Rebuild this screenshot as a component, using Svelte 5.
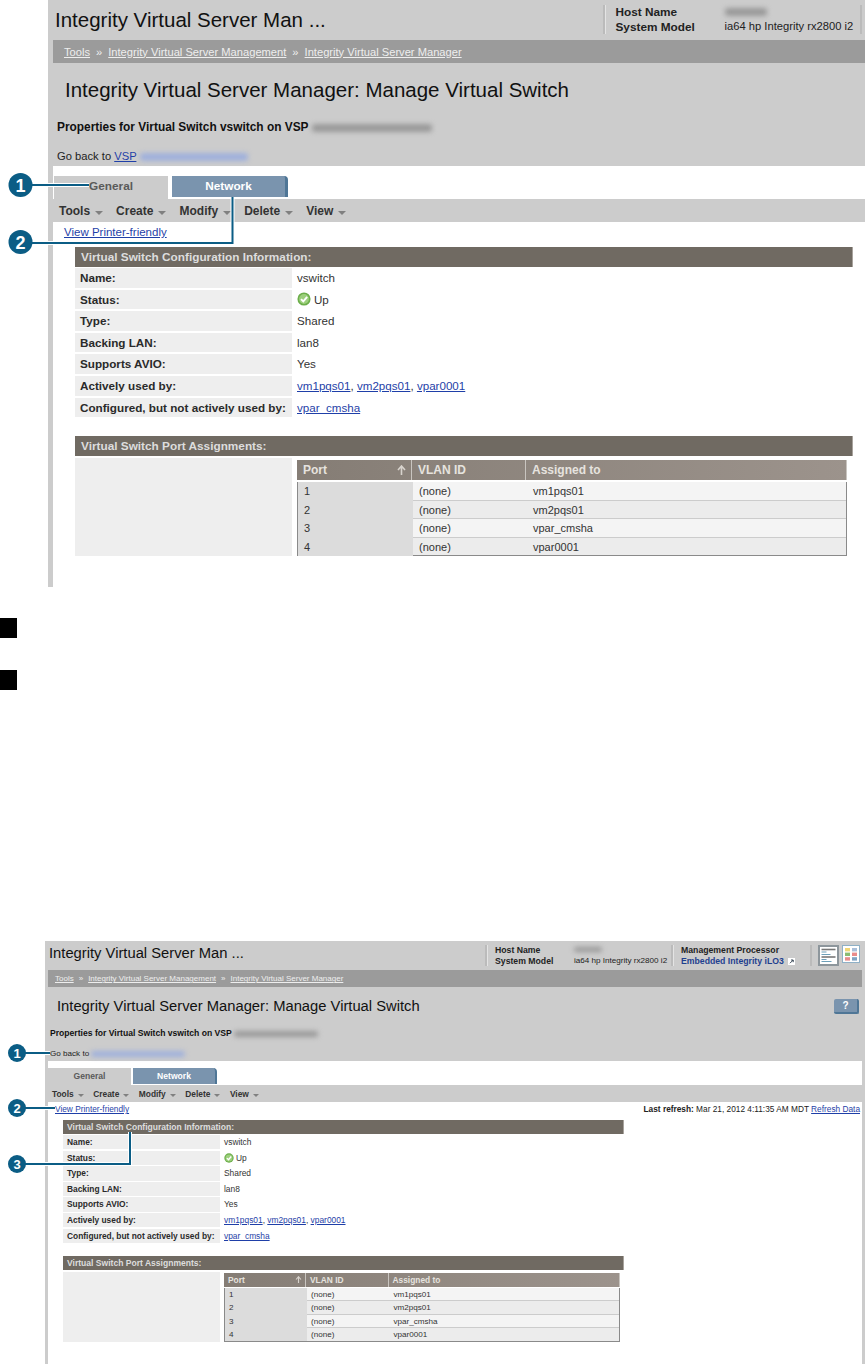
<script>
  const tools = ['Tools', 'Create', 'Modify', 'Delete', 'View'];
  const crumbs = ['Tools', 'Integrity Virtual Server Management', 'Integrity Virtual Server Manager'];
  const simpleRows = [
    ['Type:', 'Shared'],
    ['Backing LAN:', 'lan8'],
    ['Supports AVIO:', 'Yes'],
  ];
  const ports = [
    ['1', 'vm1pqs01'],
    ['2', 'vm2pqs01'],
    ['3', 'vpar_cmsha'],
    ['4', 'vpar0001'],
  ];
</script>

{#snippet screen(v)}
  <section class="fig {v}">
    <div class="head">
      <div class="topbar">
        <div class="app-title">Integrity Virtual Server Man ...</div>
        <div class="info">
          <div class="info-labels"><b>Host Name</b><b>System Model</b></div>
          <div class="info-values">
            <span class="smudge host"></span>
            <span>ia64 hp Integrity rx2800 i2</span>
          </div>
        </div>
        {#if v === 'bot'}
          <div class="info mp">
            <div class="info-labels">
              <b>Management Processor</b>
              <b class="mp-link">Embedded Integrity iLO3
                <svg class="ext" viewBox="0 0 7 7" width="7" height="7"><rect width="7" height="7" fill="#fff"/><path d="M2 5.2 5 2.2M3 2h2.2v2.2" fill="none" stroke="#234" stroke-width=".9"/></svg>
              </b>
            </div>
          </div>
          <div class="views">
            <svg class="view on" viewBox="0 0 21 21" width="21" height="21">
              <rect width="21" height="21" fill="#8d969c"/>
              <rect x="2" y="2" width="17" height="17" fill="#fff"/>
              <path d="M3.5 4.5h14" stroke="#777" stroke-width="1.6"/>
              <path d="M3.5 7h5M3.5 9.5h9" stroke="#6d9fb8"/>
              <path d="M3.5 12h14" stroke="#777" stroke-width="1.6"/>
              <path d="M3.5 14.5h5M3.5 16.5h10" stroke="#6d9fb8"/>
            </svg>
            <svg class="view" viewBox="0 0 18 18" width="18" height="18">
              <rect width="18" height="18" fill="#8fb0c6"/>
              <rect x="1" y="1" width="16" height="16" fill="#fff"/>
              <rect x="3" y="3" width="5" height="3.4" fill="#f2d675"/>
              <rect x="10" y="3" width="5" height="3.4" fill="#a9bfd9"/>
              <rect x="3" y="7.6" width="5" height="3.4" fill="#8cbb72"/>
              <rect x="10" y="7.6" width="5" height="3.4" fill="#e98b8b"/>
              <rect x="3" y="12.2" width="5" height="3.4" fill="#e98b8b"/>
              <rect x="10" y="12.2" width="5" height="3.4" fill="#7fa3c4"/>
            </svg>
          </div>
        {/if}
      </div>

      <nav class="crumbs">
        {#each crumbs as c, i}
          {#if i > 0}<span class="sep">»</span>{/if}
          <a href="#top">{c}</a>
        {/each}
      </nav>

      <div class="page-title">
        <h1>Integrity Virtual Server Manager: Manage Virtual Switch</h1>
        {#if v === 'bot'}<button class="help">?</button>{/if}
      </div>

      <p class="props"><b>Properties for Virtual Switch vswitch on VSP</b> <span class="smudge props-host"></span></p>
      <p class="back">
        Go back to
        {#if v === 'top'}<a href="#top">VSP</a>{/if}
        <span class="smudge link back-host"></span>
      </p>
    </div>

    <div class="tabs">
      <div class="tab active">General</div>
      <div class="tab">Network</div>
    </div>

    <div class="menu">
      {#each tools as t}
        <span class="menu-item">{t}<i class="caret"></i></span>
      {/each}
    </div>

    <div class="printer">
      <a href="#top">View Printer-friendly</a>
      {#if v === 'bot'}
        <span class="refresh"><b>Last refresh:</b> Mar 21, 2012 4:11:35 AM MDT <a href="#top">Refresh Data</a></span>
      {/if}
    </div>

    <div class="content">
      <h2>Virtual Switch Configuration Information:</h2>
      <div class="row first"><div class="key">Name:</div><div class="val">vswitch</div></div>
      <div class="row">
        <div class="key">Status:</div>
        <div class="val status">
          <svg class="ok" viewBox="0 0 16 16"><circle cx="8" cy="8" r="7.5" fill="#6cae4a"/><circle cx="8" cy="8" r="5.6" fill="#9ccf7c"/><path d="M4.6 8.2 7.2 10.8 11.6 5.6" fill="none" stroke="#fff" stroke-width="2.2"/></svg>
          Up
        </div>
      </div>
      {#each simpleRows as r}
        <div class="row"><div class="key">{r[0]}</div><div class="val">{r[1]}</div></div>
      {/each}
      <div class="row">
        <div class="key">Actively used by:</div>
        <div class="val"><a href="#top">vm1pqs01</a>, <a href="#top">vm2pqs01</a>, <a href="#top">vpar0001</a></div>
      </div>
      <div class="row">
        <div class="key">Configured, but not actively used by:</div>
        <div class="val"><a href="#top">vpar_cmsha</a></div>
      </div>

      <h2 class="second">Virtual Switch Port Assignments:</h2>
      <div class="ports">
        <div class="ports-key"></div>
        <div class="ports-table">
          <div class="tr th">
            <div>Port
              <svg class="sort" viewBox="0 0 9 10"><path d="M4.5 10V2M1 5l3.5-4L8 5" fill="none" stroke="#d8d3cd" stroke-width="1.6"/></svg>
            </div>
            <div>VLAN ID</div>
            <div>Assigned to</div>
          </div>
          {#each ports as p}
            <div class="tr">
              <div>{p[0]}</div>
              <div>(none)</div>
              <div>{p[1]}</div>
            </div>
          {/each}
        </div>
      </div>
    </div>
  </section>
{/snippet}

<div class="page">
  {@render screen('top')}

  <div class="bullet"></div>
  <div class="bullet"></div>

  {@render screen('bot')}

  <!-- numbered callouts sit over both screens -->
  <svg class="callouts" viewBox="0 0 865 1364" width="865" height="1364">
    <g fill="none" stroke="#fff" stroke-width="4">
      <path d="M30 185H89"/>
      <path d="M30 243H232.500V197"/>
      <path d="M24 1053H50"/>
      <path d="M24 1108H55"/>
      <path d="M24 1164H130V1132"/>
    </g>
    <g fill="none" stroke="#0b5d85" stroke-width="2">
      <path d="M30 185H89"/>
      <path d="M30 243H232.500V197"/>
      <path d="M24 1053H50"/>
      <path d="M24 1108H55"/>
      <path d="M24 1164H130V1132"/>
    </g>
    <g fill="#0b5d85">
      <circle cx="20.500" cy="185" r="12"/>
      <circle cx="20.500" cy="242" r="12"/>
      <circle cx="17" cy="1053" r="9"/>
      <circle cx="17" cy="1108" r="9"/>
      <circle cx="17" cy="1164" r="9"/>
    </g>
    <g class="num big">
      <text x="20.500" y="191.500">1</text>
      <text x="20.500" y="248.500">2</text>
    </g>
    <g class="num">
      <text x="17" y="1057.500">1</text>
      <text x="17" y="1112.500">2</text>
      <text x="17" y="1168.500">3</text>
    </g>
  </svg>
</div>

<style>
  :global(body) {
    margin: 0;
    background: #fff;
  }

  .page {
    position: relative;
    width: 865px;
    height: 1364px;
    overflow: hidden;
    font-family: "Liberation Sans", Arial, sans-serif;
    color: #222;
  }

  .callouts {
    position: absolute;
    left: 0;
    top: 0;
    pointer-events: none;
  }

  .num {
    font-family: "Liberation Sans", Arial, sans-serif;
    font-weight: 700;
    font-size: 13px;
    fill: #fff;
    text-anchor: middle;
  }

  .num.big {
    font-size: 18px;
  }

  .bullet {
    width: 17px;
    height: 20px;
    background: #000;
    margin-top: 31px;
  }

  .bullet + .bullet {
    margin-top: 32px;
  }

  a {
    color: #1f3fa8;
    text-decoration: underline;
  }

  p,
  h1,
  h2 {
    margin: 0;
  }

  .fig {
    box-sizing: border-box;
    background: #fff;
    border-left: 5px solid #ccc;
  }

  .head {
    background: #ccc;
  }

  .topbar {
    display: flex;
    align-items: flex-start;
  }

  .app-title,
  h1 {
    font-weight: 400;
    color: #111;
    white-space: nowrap;
  }

  .info {
    display: flex;
    border-left: 2px solid #bbb;
    box-shadow: inset 1px 0 #e4e4e4;
  }

  .info-labels,
  .info-values {
    display: flex;
    flex-direction: column;
    white-space: nowrap;
  }

  .crumbs {
    display: flex;
    align-items: center;
    background: #9b9b9b;
    color: #eee;
    white-space: nowrap;
  }

  .crumbs a {
    color: #eee;
  }

  .page-title {
    display: flex;
    align-items: center;
    justify-content: space-between;
  }

  .props,
  .back {
    white-space: nowrap;
    color: #222;
  }

  .props b {
    color: #111;
  }

  .smudge {
    display: inline-block;
    vertical-align: middle;
    background: #999;
    filter: blur(2.5px);
    border-radius: 3px;
  }

  .smudge.link {
    background: #9fb0dc;
  }

  .tabs {
    display: flex;
    align-items: flex-start;
  }

  .tab {
    box-sizing: border-box;
    text-align: center;
    font-weight: 700;
    color: #fff;
    background: #7a94ae;
    border-right: 3px solid #4f7696;
    border-radius: 0 4px 0 0;
  }

  .tab.active {
    color: #5a5a5a;
    background: #ccc;
    border-right: 0;
    border-radius: 0;
  }

  .menu {
    display: flex;
    align-items: center;
    background: #ccc;
    font-weight: 700;
    color: #333;
    white-space: nowrap;
  }

  .menu-item {
    display: flex;
    align-items: center;
  }

  .caret {
    border-style: solid;
    border-color: #808080 transparent transparent;
  }

  .printer {
    display: flex;
    justify-content: space-between;
    box-sizing: border-box;
    white-space: nowrap;
  }

  .refresh b {
    color: #222;
  }

  h2 {
    box-sizing: border-box;
    background: #706a62;
    color: #ddd;
    font-weight: 700;
    box-shadow: inset -1px 0 #a8a39d;
    white-space: nowrap;
  }

  .row {
    display: flex;
  }

  .key {
    background: #eee;
    font-weight: 700;
    color: #2a2a2a;
    white-space: nowrap;
    flex: none;
    box-sizing: border-box;
  }

  .val {
    white-space: nowrap;
    color: #333;
  }

  .status {
    display: flex;
    align-items: center;
  }

  .ports {
    display: flex;
  }

  .ports-key {
    background: #eee;
    flex: none;
  }

  .tr {
    display: grid;
    box-sizing: border-box;
    background: #f4f4f4;
    border-left: 1px solid #8a8a8a;
    border-right: 1px solid #8a8a8a;
    box-shadow: inset 0 -1px #ccc;
    color: #333;
  }

  .tr:nth-child(odd) {
    background: #ececec;
  }

  .tr:last-child {
    border-bottom: 1px solid #8a8a8a;
    box-shadow: none;
  }

  .tr > div:first-child {
    background: #dcdcdc;
  }

  .tr.th {
    background: linear-gradient(90deg, #857d75, #9c938c);
    border: 0;
    box-shadow: none;
    color: #e6e3df;
    font-weight: 700;
  }

  .tr.th > div {
    background: none;
    display: flex;
    justify-content: space-between;
    align-items: center;
    border-right: 1px solid #c9c5c0;
  }

  /* top screenshot */
  .top {
    margin-left: 48px;
  }

  .top .topbar {
    height: 40px;
  }

  .top .app-title {
    width: 547.500px;
    padding: 7px 0 0 2px;
    font-size: 20.500px;
    line-height: 26px;
  }

  .top .info {
    margin-top: 5px;
    height: 29px;
    padding-left: 11px;
    border-right: 2px solid #bbb;
    font-size: 11.200px;
    line-height: 15px;
  }

  .top .info-labels {
    width: 109px;
    font-size: 11.800px;
  }

  .top .info-values {
    width: 135.500px;
  }

  .top .host {
    width: 42px;
    height: 9px;
    margin: 3px 0;
  }

  .top .crumbs {
    height: 23px;
    padding-left: 11px;
    font-size: 11.150px;
  }

  .top .sep {
    margin: 0 6px;
  }

  .top .page-title {
    height: 54px;
    padding-left: 12px;
  }

  .top h1 {
    font-size: 20.500px;
  }

  .top .props {
    padding-left: 4px;
    font-size: 11.900px;
    line-height: 20px;
  }

  .top .props-host {
    width: 120px;
    height: 8px;
  }

  .top .back {
    padding: 9px 0 0 4px;
    font-size: 11.200px;
    line-height: 20px;
  }

  .top .back-host {
    width: 108px;
    height: 8px;
  }

  .top .tabs {
    height: 33px;
    padding: 10px 0 0 1px;
    box-sizing: border-box;
    gap: 4px;
  }

  .top .tab {
    width: 116px;
    height: 21px;
    line-height: 21px;
    font-size: 11.800px;
  }

  .top .tab.active {
    width: 114px;
    height: 23px;
  }

  .top .menu {
    height: 23px;
    padding-left: 6px;
    gap: 13px;
    font-size: 12px;
  }

  .top .caret {
    margin: 4px 0 0 5px;
    border-width: 4px 4px 0;
  }

  .top .printer {
    height: 25px;
    padding-left: 11px;
    font-size: 11.500px;
    line-height: 20px;
  }

  .top .content {
    margin: 0 12px 0 22px;
    padding-bottom: 31px;
    font-size: 11px;
  }

  .top h2 {
    height: 20px;
    padding-left: 6px;
    font-size: 11.800px;
    line-height: 20px;
  }

  .top h2.second {
    margin-top: 19px;
  }

  .top .row {
    height: 19.600px;
    margin-top: 2px;
    line-height: 19.600px;
    font-size: 11.600px;
    gap: 5px;
  }

  .top .row.first {
    margin-top: 1px;
  }

  .top .key {
    width: 217px;
    padding-left: 5px;
    font-size: 11.700px;
  }

  .top .ok {
    width: 14px;
    height: 14px;
    margin-right: 3px;
  }

  .top .ports {
    margin-top: 2px;
    gap: 5px;
  }

  .top .ports-key {
    width: 217px;
    height: 98px;
  }

  .top .ports-table {
    width: 550px;
    padding-top: 2px;
  }

  .top .tr {
    grid-template-columns: 115px 114px 1fr;
    height: 18.500px;
    line-height: 18px;
    font-size: 11px;
  }

  .top .tr > div {
    padding-left: 6px;
  }

  .top .tr.th {
    height: 20px;
    margin-bottom: 2px;
    line-height: 20px;
    font-size: 12px;
  }

  .top .sort {
    width: 9px;
    height: 10px;
    margin-right: 5px;
  }

  /* bottom screenshot */
  .bot {
    margin: 251px 0 0 45px;
    width: 820px;
    border-left-width: 3px;
    border-right: 3px solid #ccc;
  }

  .bot .topbar {
    height: 29px;
  }

  .bot .app-title {
    width: 436px;
    padding: 3px 0 0 1px;
    font-size: 14.750px;
    line-height: 19px;
  }

  .bot .info {
    margin-top: 4px;
    height: 21px;
    padding-left: 8px;
    font-size: 8.100px;
    line-height: 11px;
  }

  .bot .info-labels {
    width: 79px;
    font-size: 8.700px;
  }

  .bot .info-values {
    width: 97px;
  }

  .bot .host {
    width: 28px;
    height: 6px;
    margin: 2px 0 3px;
  }

  .bot .mp {
    width: 139px;
    box-sizing: border-box;
  }

  .bot .mp .info-labels {
    width: auto;
  }

  .bot .mp-link {
    color: #1f3f8f;
  }

  .bot .ext {
    vertical-align: -1px;
    margin-left: 2px;
  }

  .bot .views {
    display: flex;
    gap: 3px;
    align-items: flex-start;
    margin-top: 4px;
    padding-left: 6px;
    border-left: 2px solid #bbb;
    height: 21px;
  }

  .bot .crumbs {
    height: 17px;
    padding-left: 7px;
    font-size: 8px;
  }

  .bot .sep {
    margin: 0 5px;
  }

  .bot .page-title {
    height: 38px;
    padding: 0 0 0 9px;
  }

  .bot h1 {
    font-size: 14.750px;
  }

  .help {
    box-sizing: border-box;
    width: 25px;
    height: 15px;
    margin-right: 3px;
    padding: 0;
    border: 0;
    border-right: 2px solid #4f7696;
    border-bottom: 2px solid #4f7696;
    border-radius: 2px;
    background: #7a94ae;
    color: #fff;
    font: 700 10px "Liberation Sans", Arial, sans-serif;
  }

  .bot .props {
    padding-left: 2px;
    font-size: 8.600px;
    line-height: 16px;
  }

  .bot .props-host {
    width: 84px;
    height: 6px;
  }

  .bot .back {
    margin-top: 6px;
    padding-left: 2px;
    font-size: 8.100px;
    line-height: 14px;
  }

  .bot .back-host {
    width: 94px;
    height: 6px;
  }

  .bot .tabs {
    height: 24px;
    padding-top: 7px;
    box-sizing: border-box;
    gap: 2px;
  }

  .bot .tab {
    width: 84px;
    height: 16px;
    line-height: 16px;
    font-size: 8.600px;
    border-right-width: 2px;
  }

  .bot .tab.active {
    width: 83px;
    height: 17px;
  }

  .bot .menu {
    height: 17px;
    padding-left: 4px;
    gap: 9.500px;
    font-size: 8.400px;
  }

  .bot .caret {
    margin: 3px 0 0 4px;
    border-width: 3px 3px 0;
  }

  .bot .printer {
    height: 18px;
    padding: 0 2px 0 7px;
    font-size: 8.300px;
    line-height: 14px;
  }

  .bot .content {
    margin-left: 15px;
    width: 561px;
    padding-bottom: 22px;
    font-size: 8.100px;
  }

  .bot h2 {
    height: 14px;
    padding-left: 4px;
    font-size: 8.550px;
    line-height: 14px;
  }

  .bot h2.second {
    margin-top: 13px;
  }

  .bot .row {
    height: 14.200px;
    margin-top: 1.400px;
    line-height: 14.200px;
    font-size: 8.400px;
    gap: 4px;
  }

  .bot .row.first {
    margin-top: 1px;
  }

  .bot .key {
    width: 157px;
    padding-left: 4px;
  }

  .bot .ok {
    width: 10px;
    height: 10px;
    margin-right: 2px;
  }

  .bot .ports {
    margin-top: 2px;
    gap: 4px;
  }

  .bot .ports-key {
    width: 157px;
    height: 70px;
  }

  .bot .ports-table {
    width: 396px;
    padding-top: 1px;
  }

  .bot .tr {
    grid-template-columns: 82px 82.500px 1fr;
    height: 13.500px;
    line-height: 13px;
    font-size: 8.100px;
  }

  .bot .tr > div {
    padding-left: 4px;
  }

  .bot .tr.th {
    height: 14px;
    margin-bottom: 1px;
    line-height: 14px;
    font-size: 8.400px;
  }

  .bot .sort {
    width: 7px;
    height: 7px;
    margin-right: 3px;
  }
</style>
